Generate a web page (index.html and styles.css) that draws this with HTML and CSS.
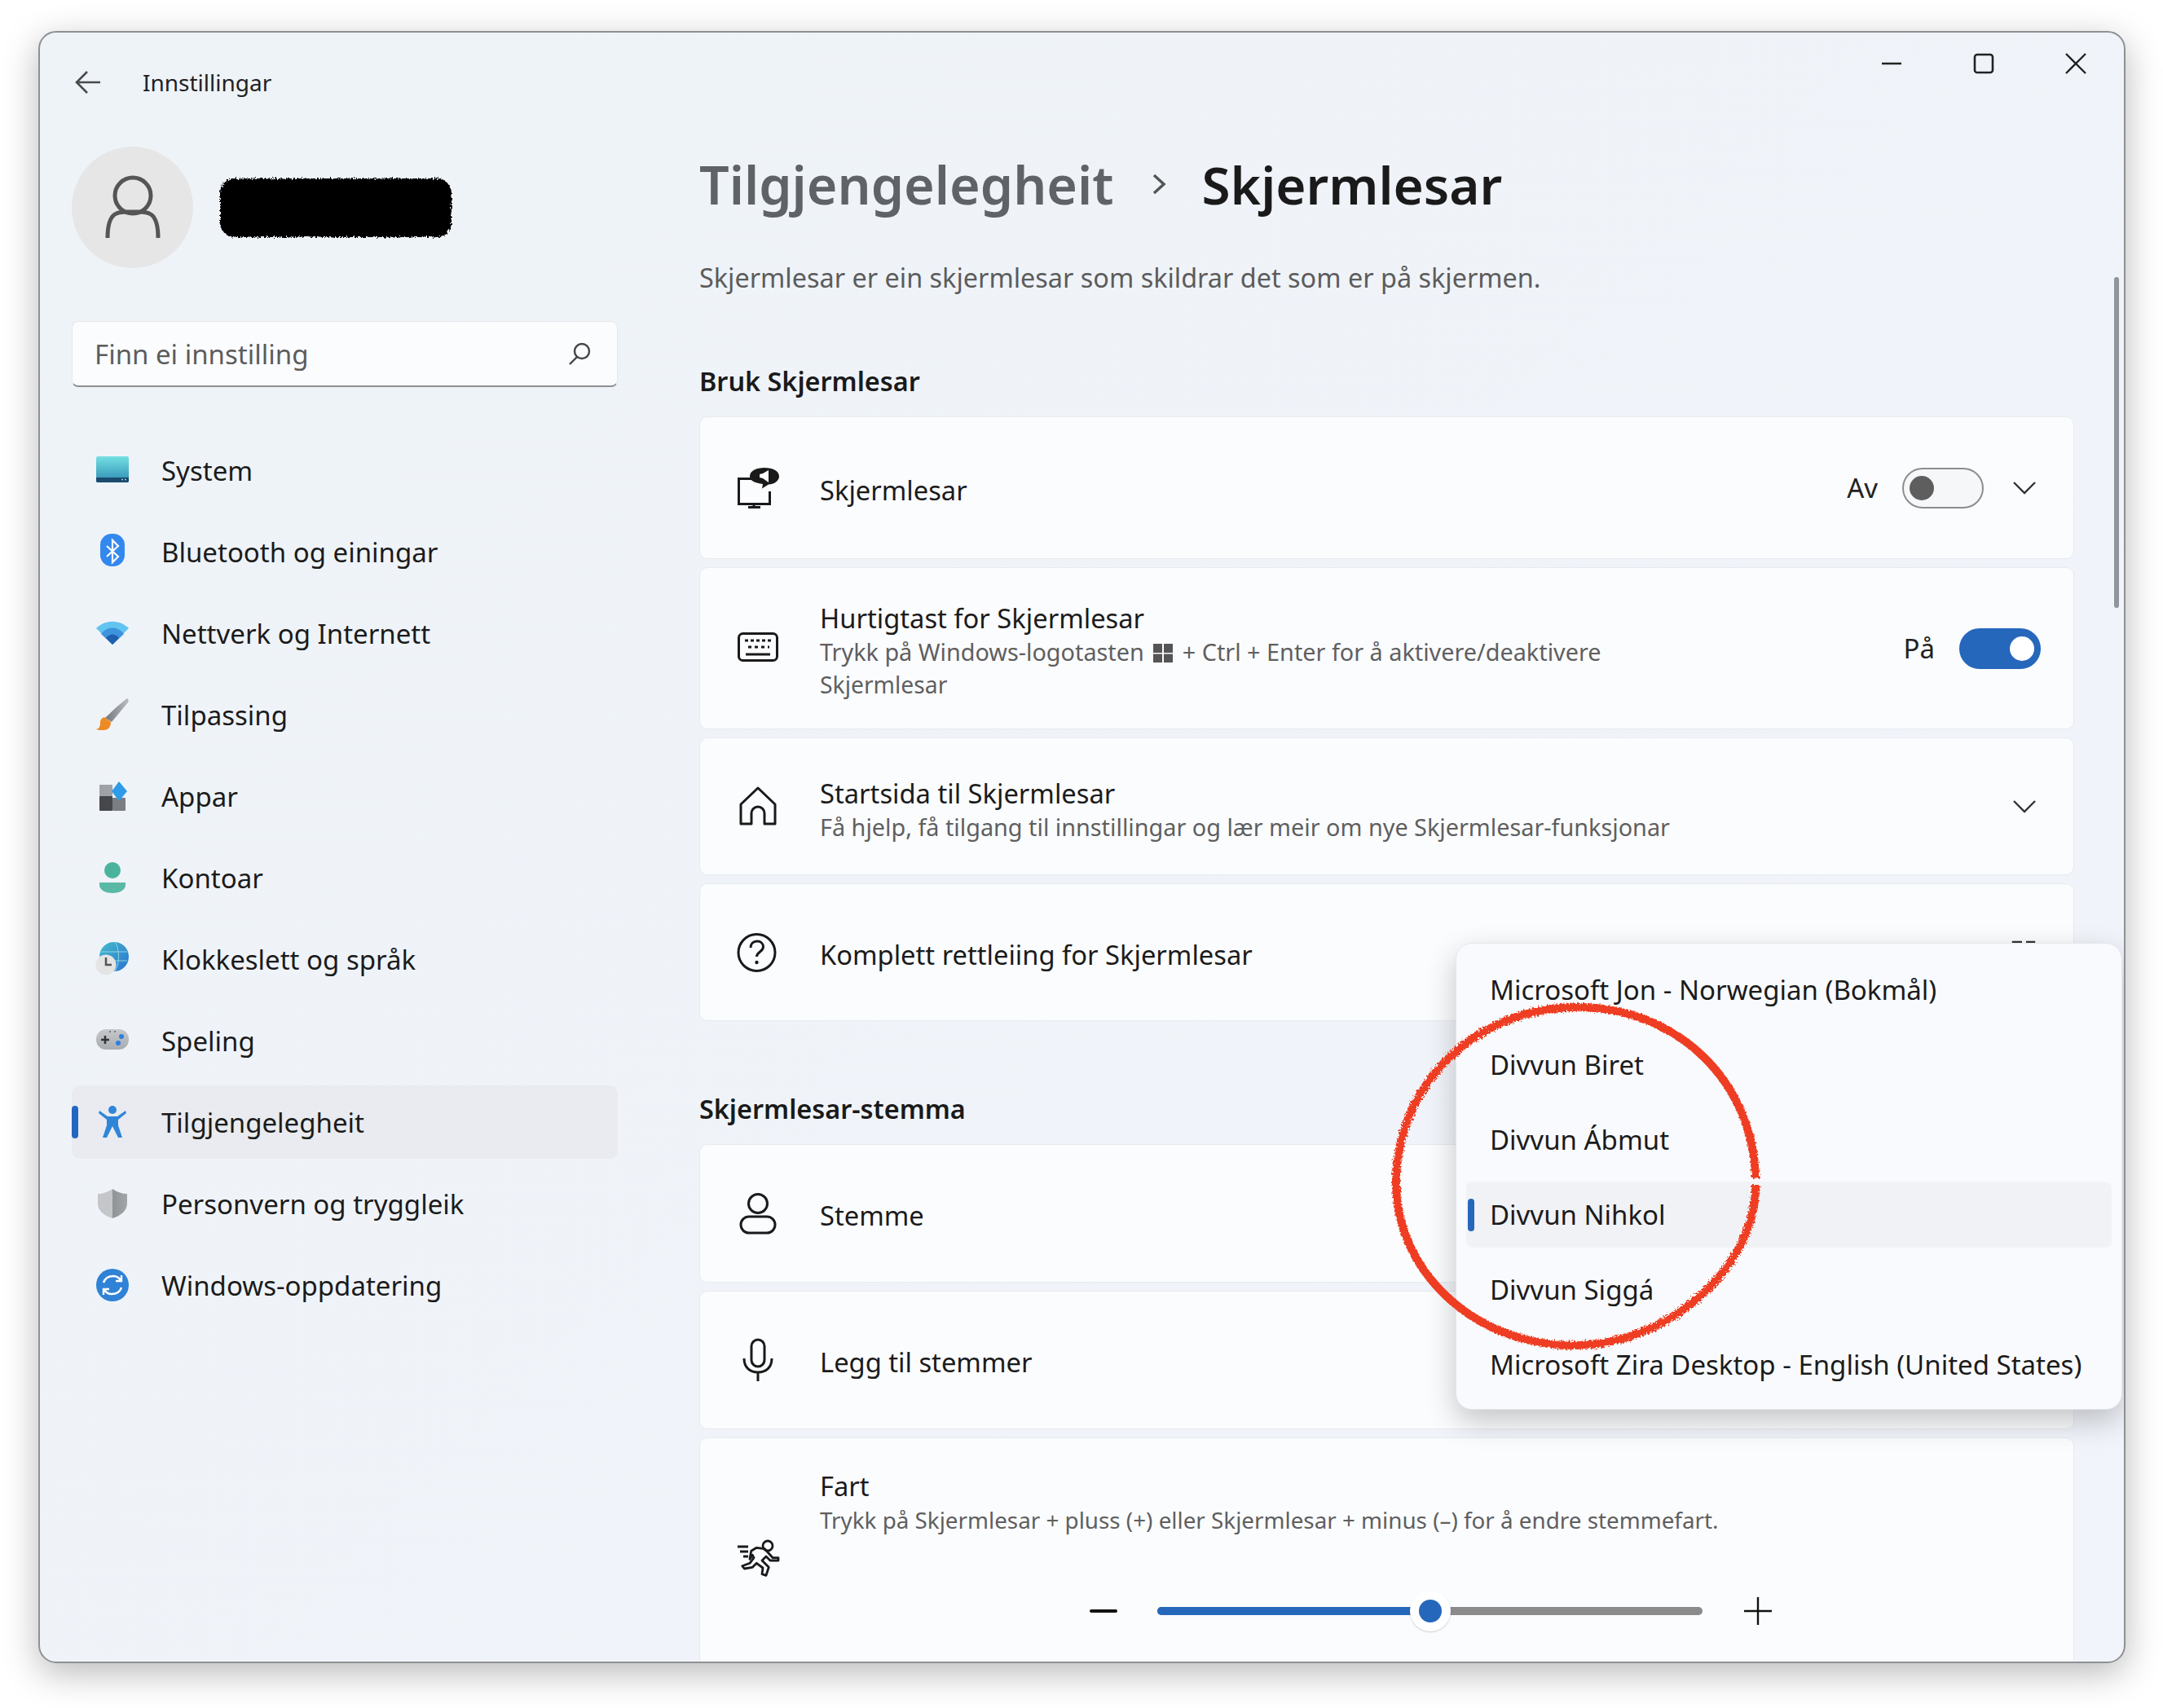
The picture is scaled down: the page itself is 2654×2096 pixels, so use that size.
FILE: index.html
```html
<!DOCTYPE html>
<html lang="nn">
<head>
  <meta charset="UTF-8">
  <title>Innstillingar</title>
  <link rel="stylesheet" href="styles.css">
</head>
<body>
  <div class="window">
    <div class="titlebar">
      <div class="title-left">
        <svg class="back-icon" width="32" height="30" viewBox="0 0 32 30"><path d="M31 15H2M15 2 2 15l13 13" fill="none" stroke="#4a4a4a" stroke-width="2.6"/></svg>
        <span class="app-title">Innstillingar</span>
      </div>
      <div class="win-controls">
        <svg width="26" height="26" viewBox="0 0 26 26"><path d="M1 13h24" stroke="#222" stroke-width="2.4"/></svg>
        <svg width="26" height="26" viewBox="0 0 26 26"><rect x="2" y="2" width="22" height="22" rx="3" fill="none" stroke="#222" stroke-width="2.6"/></svg>
        <svg width="26" height="26" viewBox="0 0 26 26"><path d="M1 1l24 24M25 1 1 25" stroke="#222" stroke-width="2.4"/></svg>
      </div>
    </div>

    <div class="content">
      <aside class="sidebar">
        <div class="user-row">
          <div class="avatar">
            <svg width="149" height="149" viewBox="0 0 149 149"><circle cx="75" cy="60" r="22" fill="none" stroke="#555" stroke-width="5"/><path d="M44 112c0-36 15-32 31-32s31-4 31 32" fill="none" stroke="#555" stroke-width="5"/></svg>
          </div>
          <svg class="redact" width="290" height="80" viewBox="0 0 290 80">
            <defs><filter id="rough-black" x="-3%" y="-8%" width="106%" height="116%"><feTurbulence type="fractalNoise" baseFrequency="0.45" numOctaves="2" result="n"/><feDisplacementMap in="SourceGraphic" in2="n" scale="7"/></filter></defs>
            <rect x="3" y="4" width="284" height="72" rx="18" fill="#000" filter="url(#rough-black)"/>
          </svg>
        </div>

        <div class="search-box">
          <span>Finn ei innstilling</span>
          <svg width="28" height="28" viewBox="0 0 28 28"><circle cx="17" cy="11" r="9" fill="none" stroke="#444" stroke-width="2.4"/><path d="M11 18 2 27" stroke="#444" stroke-width="2.4"/></svg>
        </div>

        <nav class="nav">
          <div class="nav-item">
            <svg class="nav-icon" viewBox="0 0 40 40"><defs><linearGradient id="g-sys" x1="0" y1="0" x2="0" y2="1"><stop offset="0" stop-color="#75e0e3"/><stop offset="1" stop-color="#2d8db3"/></linearGradient></defs><rect x="0" y="3" width="40" height="32" rx="2" fill="url(#g-sys)"/><path d="M0 29h40v4a2 2 0 0 1-2 2H2a2 2 0 0 1-2-2z" fill="#1a4a6c"/><path d="M31 31.500h2M35 31.500h2" stroke="#9cc" stroke-width="1.500"/></svg>
            <span>System</span>
          </div>
          <div class="nav-item">
            <svg class="nav-icon" viewBox="0 0 40 40"><rect x="5" y="-2" width="30" height="40" rx="14" fill="#3388ee"/><path d="M13 13l14 13-7 7V6l7 7-14 13" fill="none" stroke="#fff" stroke-width="2.200"/></svg>
            <span>Bluetooth og einingar</span>
          </div>
          <div class="nav-item">
            <svg class="nav-icon" viewBox="0 0 40 40"><path d="M0 14C11 3 29 3 40 14L20 34z" fill="#62c4f0"/><path d="M6 21C13 11 27 11 34 21L20 34z" fill="#3d94dc"/><path d="M12 26C16 20 24 20 28 26L20 34z" fill="#1f5fae"/></svg>
            <span>Nettverk og Internett</span>
          </div>
          <div class="nav-item">
            <svg class="nav-icon" viewBox="0 0 40 40"><defs><linearGradient id="g-brush" x1="0" y1="0" x2="1" y2="0"><stop offset="0" stop-color="#73777b"/><stop offset="1" stop-color="#b9bcc0"/></linearGradient></defs><path d="M38 0c2 1 2 3 1 5L19 29l-8-5C21 14 30 6 38 0z" fill="url(#g-brush)"/><path d="M10 23l8 6c0 6-3 10-9 10-4 0-7 0-9-1 4-1 5-4 5-8 0-4 2-6 5-7z" fill="#ee8a24"/></svg>
            <span>Tilpassing</span>
          </div>
          <div class="nav-item">
            <svg class="nav-icon" viewBox="0 0 40 40"><rect x="4" y="6" width="16" height="17" fill="#9fa3a8"/><rect x="4" y="20" width="16" height="18" rx="1" fill="#45474a"/><rect x="20" y="22" width="16" height="16" rx="1" fill="#7b7e82"/><path d="M28 2l10 12-10 12-9-12z" fill="#2e9be8"/></svg>
            <span>Appar</span>
          </div>
          <div class="nav-item">
            <svg class="nav-icon" viewBox="0 0 40 40"><circle cx="20" cy="11" r="10" fill="#4bb39d"/><path d="M4 26h32v3c0 6-7 10-16 10S4 35 4 29z" fill="#5ab9a5"/></svg>
            <span>Kontoar</span>
          </div>
          <div class="nav-item">
            <svg class="nav-icon" viewBox="0 0 40 40"><defs><linearGradient id="g-globe" x1="0" y1="0" x2="1" y2="1"><stop offset="0" stop-color="#45bccb"/><stop offset="1" stop-color="#2a73d0"/></linearGradient></defs><circle cx="22" cy="17" r="18" fill="url(#g-globe)"/><path d="M23 -1c6 8 6 28 0 36M6 11h32M6 22h32" fill="none" stroke="#8fd4e6" stroke-width="1"/><circle cx="12" cy="27" r="12.500" fill="#e4e4e4"/><path d="M12 18v9h7" fill="none" stroke="#555" stroke-width="2.500"/></svg>
            <span>Klokkeslett og språk</span>
          </div>
          <div class="nav-item">
            <svg class="nav-icon" viewBox="0 0 40 40"><defs><linearGradient id="g-pad" x1="0" y1="0" x2="0" y2="1"><stop offset="0" stop-color="#c6c8cb"/><stop offset="1" stop-color="#a9acb0"/></linearGradient></defs><rect x="0" y="6" width="40" height="25" rx="12" fill="url(#g-pad)"/><path d="M6 19h10M11 14v10" stroke="#333" stroke-width="2.500"/><circle cx="31" cy="15" r="3" fill="#2c7fe0"/><circle cx="27" cy="23" r="3" fill="#2c7fe0"/><circle cx="17" cy="9" r="0.900" fill="#555"/><circle cx="23" cy="9" r="0.900" fill="#555"/></svg>
            <span>Speling</span>
          </div>
          <div class="nav-item nav-item-active">
            <svg class="nav-icon" viewBox="0 0 40 40"><circle cx="20" cy="5" r="5" fill="#2f86d8"/><path d="M4 6l10 7h12l10-7 1 3-10 8v7l5 15h-5l-7-14-7 14H8l5-15v-7L3 9z" fill="#2f86d8"/></svg>
            <span>Tilgjengelegheit</span>
          </div>
          <div class="nav-item">
            <svg class="nav-icon" viewBox="0 0 40 40"><defs><linearGradient id="g-shield" x1="0" y1="0" x2="1" y2="0"><stop offset="0" stop-color="#c4c6c9"/><stop offset="0.5" stop-color="#c4c6c9"/><stop offset="0.5" stop-color="#909396"/><stop offset="1" stop-color="#a3a6a9"/></linearGradient></defs><path d="M20 2c6 4 12 6 18 6v12c0 9-8 15-18 18C10 35 2 29 2 20V8c6 0 12-2 18-6z" fill="url(#g-shield)"/></svg>
            <span>Personvern og tryggleik</span>
          </div>
          <div class="nav-item">
            <svg class="nav-icon" viewBox="0 0 40 40"><circle cx="20" cy="20" r="20" fill="#2f82d6"/><path d="M9 17c2-6 7-8 12-8 4 0 7 2 9 5M31 8v7h-7M31 23c-2 6-7 8-12 8-4 0-7-2-9-5M9 32v-7h7" fill="none" stroke="#fff" stroke-width="2.400"/></svg>
            <span>Windows-oppdatering</span>
          </div>
        </nav>
      </aside>

      <main class="main">
        <h1 class="breadcrumb">
          <span class="crumb-parent">Tilgjengelegheit</span>
          <svg class="crumb-sep" width="20" height="30" viewBox="0 0 20 30"><path d="M4 4l12 11L4 26" fill="none" stroke="#555" stroke-width="3.500"/></svg>
          <span class="crumb-current">Skjermlesar</span>
        </h1>
        <p class="page-desc">Skjermlesar er ein skjermlesar som skildrar det som er på skjermen.</p>

        <h2 class="section-title section-first">Bruk Skjermlesar</h2>
        <div class="card-list">
          <div class="card card-h175">
            <svg class="card-icon" viewBox="0 0 60 60"><path d="M24 18.500H6.500v31h38V34" fill="none" stroke="#1a1a1a" stroke-width="3"/><path d="M25 50v3M18 53.500h15" stroke="#1a1a1a" stroke-width="3"/><path d="M38 5c10 0 18 4 18 10.500 0 6-7 10-13 10l-8 5 1-5.500c-9-1-16-4-16-9.500C20 9 28 5 38 5z" fill="#1a1a1a"/><path d="M43 8v15l-7-5-4-1v-4l4-1z" fill="#fbfcfe"/></svg>
            <div class="card-text"><div class="card-title">Skjermlesar</div></div>
            <div class="card-right">
              <span class="state-label">Av</span>
              <div class="toggle"><span class="knob"></span></div>
              <svg class="chevron" width="28" height="16" viewBox="0 0 28 16"><path d="M1 1l13 13L27 1" fill="none" stroke="#333" stroke-width="2.400"/></svg>
            </div>
          </div>
          <div class="card card-h199">
            <svg class="card-icon" viewBox="0 0 60 60"><rect x="6.500" y="11.500" width="47" height="33" rx="5" fill="none" stroke="#1a1a1a" stroke-width="3"/><path d="M14 20h4M21 20h4M28 20h4M35 20h4M42 20h4M18 28h4M26 28h4M34 28h4M42 28h2" stroke="#1a1a1a" stroke-width="3"/><path d="M15 37h30" stroke="#1a1a1a" stroke-width="3"/></svg>
            <div class="card-text">
              <div class="card-title">Hurtigtast for Skjermlesar</div>
              <div class="card-sub card-sub-wide">Trykk på Windows-logotasten <svg class="win-logo" width="24" height="23" viewBox="0 0 24 23"><path d="M0 0h11v11H0zM13 0h11v11H13zM0 12.500h11V23H0zM13 12.500h11V23H13z" fill="#555"/></svg> + Ctrl + Enter for å aktivere/deaktivere<br><span class="card-sub-plain">Skjermlesar</span></div>
            </div>
            <div class="card-right">
              <span class="state-label">På</span>
              <div class="toggle toggle-on"><span class="knob"></span></div>
            </div>
          </div>
          <div class="card card-h169">
            <svg class="card-icon" viewBox="0 0 60 60"><path d="M30 7 9 27v24h13V38a8 8 0 0 1 16 0v13h13V27z" fill="none" stroke="#1a1a1a" stroke-width="3" stroke-linejoin="round"/></svg>
            <div class="card-text card-text-low">
              <div class="card-title">Startsida til Skjermlesar</div>
              <div class="card-sub card-sub-wide">Få hjelp, få tilgang til innstillingar og lær meir om nye Skjermlesar-funksjonar</div>
            </div>
            <div class="card-right">
              <svg class="chevron" width="28" height="16" viewBox="0 0 28 16"><path d="M1 1l13 13L27 1" fill="none" stroke="#333" stroke-width="2.400"/></svg>
            </div>
          </div>
          <div class="card card-h169">
            <svg class="card-icon" viewBox="0 0 60 60"><circle cx="28.500" cy="30" r="22.500" fill="none" stroke="#1a1a1a" stroke-width="3"/><path d="M21 24c0-5 3.500-8 8-8s7.500 3 7.500 7c0 6-8 6-8 12" fill="none" stroke="#1a1a1a" stroke-width="3"/><circle cx="28.500" cy="42" r="2.200" fill="#1a1a1a"/></svg>
            <div class="card-text"><div class="card-title">Komplett rettleiing for Skjermlesar</div></div>
            <div class="card-right">
              <svg class="chevron" width="30" height="30" viewBox="0 0 30 30"><path d="M13 2H2v26h26V17M18 2h10v10M28 2 14 16" fill="none" stroke="#333" stroke-width="2.400"/></svg>
            </div>
          </div>
        </div>

        <h2 class="section-title section-second">Skjermlesar-stemma</h2>
        <div class="card-list">
          <div class="card card-h170">
            <svg class="card-icon" viewBox="0 0 60 60"><circle cx="30" cy="18" r="11.500" fill="none" stroke="#1a1a1a" stroke-width="3"/><rect x="9" y="34" width="42" height="20" rx="10" fill="none" stroke="#1a1a1a" stroke-width="3"/></svg>
            <div class="card-text card-text-high"><div class="card-title">Stemme</div></div>
          </div>
          <div class="card card-h170">
            <svg class="card-icon" viewBox="0 0 60 60"><rect x="22" y="5" width="16" height="33" rx="8" fill="none" stroke="#1a1a1a" stroke-width="3"/><path d="M13 28c0 11 7 17 17 17s17-6 17-17M30 45v11" fill="none" stroke="#1a1a1a" stroke-width="3"/></svg>
            <div class="card-text card-text-high"><div class="card-title">Legg til stemmer</div></div>
          </div>
          <div class="card card-tall">
            <svg class="card-icon" viewBox="0 0 60 60"><circle cx="42" cy="15" r="6" fill="none" stroke="#1a1a1a" stroke-width="2.800"/><path d="M5 16h13M8 22h10M12 28h6" fill="none" stroke="#1a1a1a" stroke-width="2.800"/><path d="M21.700 21.300 28.300 17.300 38.300 18.700 48.300 29.700H55V33H45L40 28 35 33 43.300 41.300 40 51.300 35 49.700 36 42 28.300 36.300 23.300 41.300 13.300 43 10.700 39.700 20 36.300 25 29.700 23.300 26.300 20 31.300z" fill="none" stroke="#1a1a1a" stroke-width="2.800" stroke-linejoin="round"/></svg>
            <div class="card-text card-text-top">
              <div class="card-title">Fart</div>
              <div class="card-sub card-sub-narrow">Trykk på Skjermlesar + pluss (+) eller Skjermlesar + minus (–) for å endre stemmefart.</div>
              <div class="slider-row">
                <span class="slider-minus"></span>
                <div class="slider-track">
                  <div class="slider-fill" style="width: 50%"></div>
                  <span class="slider-thumb" style="left: 50%"></span>
                </div>
                <svg width="34" height="34" viewBox="0 0 34 34"><path d="M0 17h34M17 0v34" stroke="#111" stroke-width="2.400"/></svg>
              </div>
            </div>
          </div>
        </div>
      </main>
    </div>

    <div class="scrollbar"></div>

    <div class="voice-menu">
      <div class="voice-item">Microsoft Jon - Norwegian (Bokmål)</div>
      <div class="voice-item">Divvun Biret</div>
      <div class="voice-item">Divvun Ábmut</div>
      <div class="voice-item voice-item-active">Divvun Nihkol</div>
      <div class="voice-item">Divvun Siggá</div>
      <div class="voice-item">Microsoft Zira Desktop - English (United States)</div>
    </div>

    <svg class="red-circle" width="480" height="450" viewBox="0 0 480 450">
      <defs><filter id="rough-red" x="-5%" y="-5%" width="110%" height="110%"><feTurbulence type="fractalNoise" baseFrequency="0.45" numOctaves="2" result="n"/><feDisplacementMap in="SourceGraphic" in2="n" scale="7"/></filter></defs>
      <path d="M456 224C454 108 362 13 236 14C112 15 18 108 15 224C12 336 110 429 232 429C356 429 458 326 456 232" fill="none" stroke="#ee3e24" stroke-width="10" filter="url(#rough-red)"/>
    </svg>
  </div>
</body>
</html>
```

FILE: styles.css
```css
* {
  box-sizing: border-box;
}
html, body {
  margin: 0;
  background: #fff;
}
body {
  height: 2096px;
  padding: 38px 0 0 47px;
  overflow: hidden;
  font-family: "Noto Sans", "Open Sans", sans-serif;
  font-size: 33px;
  color: #1b1b1b;
}

.window {
  position: relative;
  display: flex;
  flex-direction: column;
  width: 2561px;
  height: 2003px;
  background: linear-gradient(135deg, #eef3f8 0%, #f1f4fa 100%);
  border: 2px solid #8e9093;
  border-radius: 22px;
  box-shadow: 0 12px 44px rgba(0, 0, 0, 0.28);
  overflow: hidden;
}

.titlebar {
  display: flex;
  flex: none;
  justify-content: space-between;
  align-items: flex-start;
  height: 112px;
  padding: 25px 46px 0 43px;
}
.title-left {
  display: flex;
  align-items: center;
  gap: 51px;
  height: 42px;
  margin-top: 15px;
}
.app-title {
  font-size: 28px;
  color: #222;
}
.win-controls {
  display: flex;
  gap: 87px;
}

.content {
  display: flex;
  flex: 1;
  min-height: 0;
}

.sidebar {
  flex: none;
  width: 809px;
  padding: 28px 100px 0 39px;
}
.user-row {
  display: flex;
  align-items: center;
  gap: 30px;
}
.avatar {
  width: 149px;
  height: 149px;
  border-radius: 50%;
  background: #e6e6e7;
}
.search-box {
  display: flex;
  justify-content: space-between;
  align-items: center;
  height: 81px;
  margin-top: 65px;
  padding: 0 32px 0 27px;
  background: #fbfcfe;
  border: 1px solid #e6e8ec;
  border-bottom: 2px solid #8d8f92;
  border-radius: 8px;
  color: #5c5c5c;
}
.nav {
  display: flex;
  flex-direction: column;
  gap: 10px;
  margin-top: 57px;
}
.nav-item {
  position: relative;
  display: flex;
  align-items: center;
  gap: 40px;
  height: 90px;
  padding-left: 30px;
  border-radius: 10px;
}
.nav-item-active {
  background: #e9ebf0;
}
.nav-item-active::before {
  content: "";
  position: absolute;
  left: 0;
  top: 25px;
  width: 8px;
  height: 40px;
  border-radius: 4px;
  background: #2366c0;
}
.nav-icon {
  flex: none;
  width: 40px;
  height: 40px;
  overflow: visible;
}

.main {
  flex: 1;
  min-width: 0;
  padding: 29px 61px 0 0;
}
.breadcrumb {
  display: flex;
  align-items: center;
  height: 90px;
  margin: 0;
  font-size: 64.500px;
  font-weight: 600;
  color: #1a1a1a;
}
.crumb-parent {
  color: #5f6367;
}
.crumb-current {
  font-size: 63.800px;
}
.crumb-sep {
  margin: 0 43px 0 45px;
}
.page-desc {
  margin: 46px 0 0;
  font-size: 32.400px;
  line-height: 46px;
  color: #5c5c5c;
}
.section-title {
  line-height: 46px;
  font-size: 32.400px;
  font-weight: 600;
  color: #1a1a1a;
}
.section-first {
  margin: 81px 0 21px;
}
.section-second {
  margin: 84px 0 21px;
}

.card-list {
  display: flex;
  flex-direction: column;
  gap: 10px;
}
.card {
  display: flex;
  align-items: center;
  padding: 0 40px 0 41px;
  background: #fbfcfe;
  border: 1px solid #e7eaee;
  border-radius: 10px;
}
.card-h175 { height: 175px; }
.card-h199 { height: 199px; }
.card-h169 { height: 169px; }
.card-h170 { height: 170px; }
.card-tall { height: 296px; }

.card-icon {
  flex: none;
  width: 60px;
  height: 60px;
}
.card-text {
  flex: 1;
  min-width: 0;
  margin-left: 46px;
  padding-top: 5px;
}
.card-text-low {
  padding-top: 8px;
}
.card-text-high {
  padding-top: 4px;
}
.card-text-top {
  align-self: flex-start;
  padding-top: 37px;
}
.card-title {
  font-size: 32.700px;
  line-height: 43px;
}
.card-sub {
  font-size: 28.300px;
  line-height: 40px;
  color: #5f5f5f;
}
.card-sub-wide {
  font-size: 28.800px;
}
.card-sub-plain {
  font-size: 28.300px;
}
.card-sub-narrow {
  font-size: 27.800px;
}
.win-logo {
  vertical-align: -2px;
  margin: 0 4px;
}
.card-right {
  display: flex;
  align-items: center;
  gap: 30px;
}
.state-label {
  color: #222;
}
.chevron {
  margin: 0 6px 0 6px;
}

.toggle {
  position: relative;
  width: 100px;
  height: 50px;
  background: #f6f7f9;
  border: 2px solid #8b8d90;
  border-radius: 25px;
}
.knob {
  position: absolute;
  left: 7px;
  top: 8px;
  width: 30px;
  height: 30px;
  border-radius: 50%;
  background: #5e5e5e;
}
.toggle-on {
  background: #2567bb;
  border-color: #2567bb;
}
.toggle-on .knob {
  left: 60px;
  background: #fff;
}

.slider-row {
  display: flex;
  align-items: center;
  height: 50px;
  margin: 67px 0 0 331px;
}
.slider-minus {
  width: 34px;
  height: 4px;
  margin-right: 49px;
  background: #111;
  border-radius: 2px;
}
.slider-track {
  position: relative;
  width: 669px;
  height: 10px;
  margin-right: 51px;
  background: #8b8b8b;
  border-radius: 5px;
}
.slider-fill {
  height: 100%;
  background: #2567bb;
  border-radius: 5px 0 0 5px;
}
.slider-thumb {
  position: absolute;
  top: -20px;
  width: 50px;
  height: 50px;
  margin-left: -25px;
  background: #fff;
  border: 11px solid #fff;
  border-radius: 50%;
  box-shadow: 0 1px 2px rgba(0, 0, 0, 0.2);
}
.slider-thumb::after {
  content: "";
  display: block;
  width: 28px;
  height: 28px;
  border-radius: 50%;
  background: #2567bb;
}

.scrollbar {
  position: absolute;
  left: 2545px;
  top: 300px;
  width: 6px;
  height: 406px;
  border-radius: 3px;
  background: #8f959a;
}

.voice-menu {
  position: absolute;
  left: 1737px;
  top: 1117px;
  display: flex;
  flex-direction: column;
  gap: 11px;
  width: 818px;
  height: 573px;
  padding: 16px 12px 0;
  background: #f8fafd;
  border: 1px solid #e4e6ea;
  border-radius: 20px;
  box-shadow: 0 14px 36px rgba(0, 0, 0, 0.22);
}
.voice-item {
  position: relative;
  display: flex;
  align-items: center;
  height: 81px;
  padding-left: 29px;
  border-radius: 8px;
  white-space: nowrap;
}
.voice-item-active {
  background: #f1f2f5;
}
.voice-item-active::before {
  content: "";
  position: absolute;
  left: 2px;
  top: 21px;
  width: 8px;
  height: 40px;
  border-radius: 4px;
  background: #2567bb;
}

.red-circle {
  position: absolute;
  left: 1649px;
  top: 1182px;
}
```
